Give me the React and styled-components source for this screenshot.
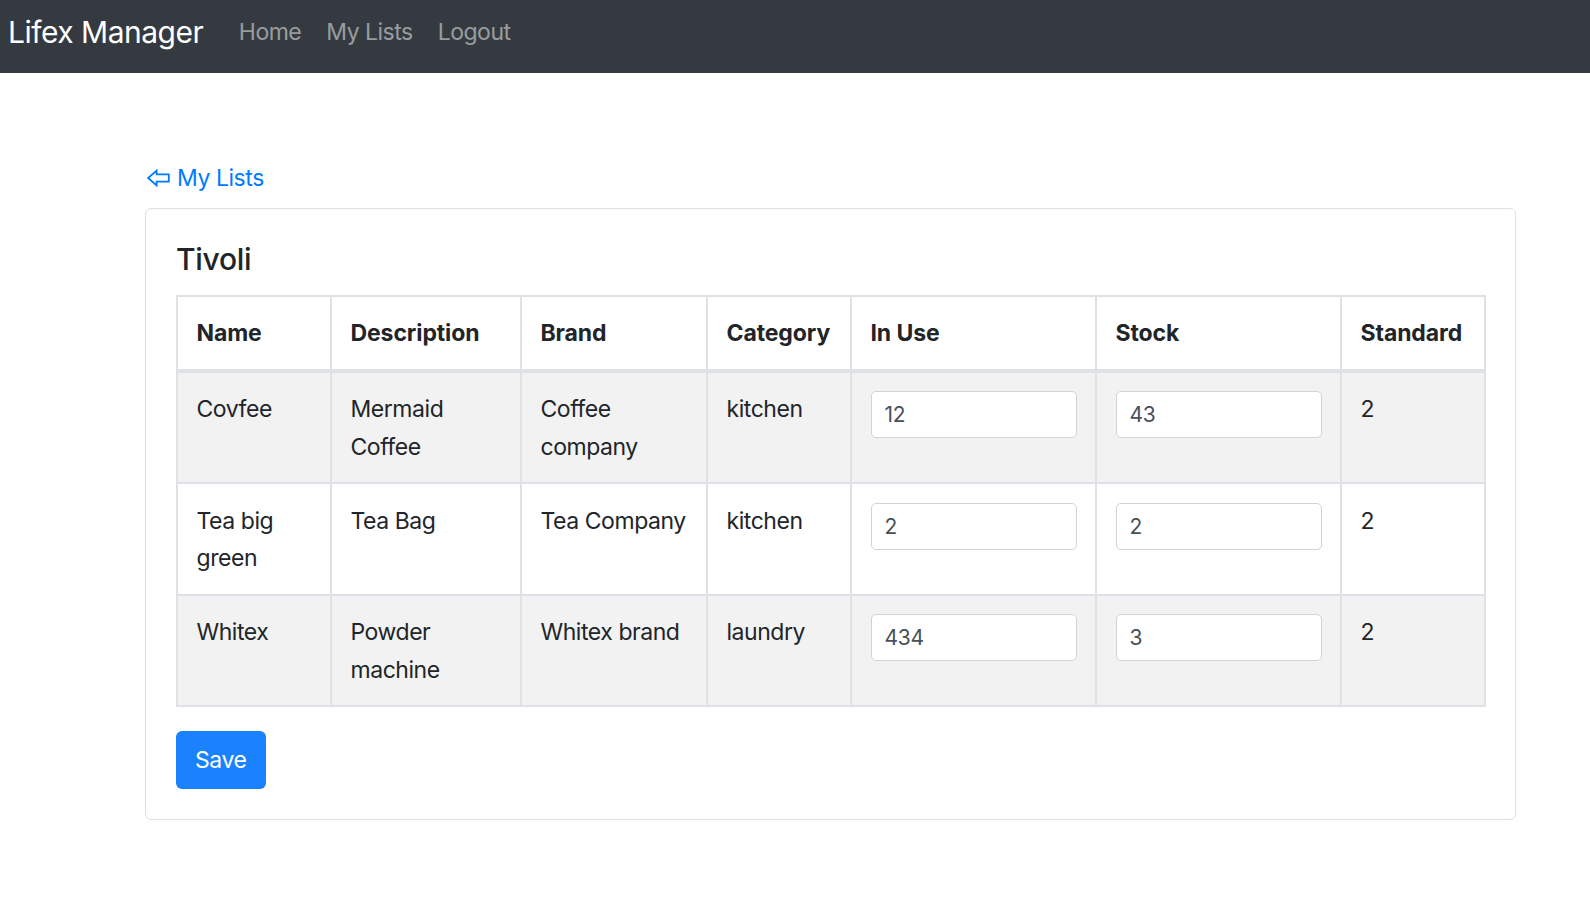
import React from 'react';
import styled, { createGlobalStyle } from 'styled-components';

const GlobalStyle = createGlobalStyle`
  body {
    margin: 0;
    background: #fff;
    font-family: Inter, "Liberation Sans", sans-serif;
    color: #212529;
  }
`;

const font = `Inter, "Liberation Sans", sans-serif`;

const NavBar = styled.nav`
  height: 73px;
  background: #343a40;
  display: flex;
  align-items: center;
  padding: 0 8px;
  box-sizing: border-box;
`;

const Brand = styled.a`
  font-family: ${font};
  font-size: 30px;
  letter-spacing: -0.5px;
  color: #fff;
  margin-right: 23px;
  padding-bottom: 10px;
`;

const NavLink = styled.a`
  font-family: ${font};
  font-size: 23px;
  letter-spacing: -0.5px;
  color: rgba(255, 255, 255, 0.5);
  padding: 0 12.5px;
  padding-bottom: 9px;
`;

const Main = styled.main`
  padding: 87px 0 0 145px;
`;

const Container = styled.div`
  width: 1371px;
`;

const BackLink = styled.a`
  display: inline-flex;
  align-items: center;
  gap: 7px;
  font-family: ${font};
  font-size: 23px;
  line-height: 36px;
  letter-spacing: -0.45px;
  color: #007bff;
  margin-left: 2px;
  margin-bottom: 12px;
`;

const Card = styled.div`
  border: 1.5px solid #e0e0e0;
  border-radius: 6px;
  padding: 30px;
`;

const Title = styled.h5`
  margin: 2px 0 16px;
  font-family: ${font};
  font-size: 30px;
  font-weight: 500;
  line-height: 37.5px;
  letter-spacing: -0.3px;
  color: #212529;
`;

const Table = styled.table`
  width: 100%;
  table-layout: fixed;
  border-collapse: collapse;
  margin-bottom: 24px;
  font-family: ${font};
  font-size: 23px;
  letter-spacing: -0.45px;
  line-height: 37.5px;
  color: #212529;
`;

const Th = styled.th`
  text-align: left;
  font-weight: 700;
  letter-spacing: -0.1px;
  padding: 18px 18.5px 16.5px;
  border: 2px solid #dee2e6;
  border-bottom-width: 4px;
  vertical-align: bottom;
`;

const Tr = styled.tr`
  background: ${(p) => (p.$striped ? '#f2f2f2' : '#fff')};
`;

const Td = styled.td`
  padding: 18.5px 18.5px 16px;
  border: 2px solid #dee2e6;
  vertical-align: top;
`;

const Input = styled.input`
  display: block;
  width: 100%;
  box-sizing: border-box;
  height: 47px;
  padding: 0 13px;
  font-family: ${font};
  font-size: 21px;
  letter-spacing: -0.3px;
  color: #495057;
  background: #fff;
  border: 1.5px solid #ced4da;
  border-radius: 5px;
  outline: none;
`;

const SaveButton = styled.button`
  font-family: ${font};
  font-size: 23px;
  letter-spacing: -0.4px;
  line-height: 36px;
  color: #fff;
  background: #1a82ff;
  border: none;
  border-radius: 6px;
  padding: 10px 19px;
  height: 58px;
`;

const ArrowIcon = () => (
  <svg width="23" height="18" viewBox="0 0 23 18" fill="none">
    <path
      d="M1.2 9 L9.6 1.6 L9.6 5.4 L21.8 5.4 L21.8 12.6 L9.6 12.6 L9.6 16.4 Z"
      stroke="#007bff"
      strokeWidth="1.8"
      strokeLinejoin="miter"
    />
  </svg>
);

const items = [
  { name: 'Covfee', desc: 'Mermaid Coffee', brand: 'Coffee company', cat: 'kitchen', inUse: '12', stock: '43', std: 2 },
  { name: 'Tea big green', desc: 'Tea Bag', brand: 'Tea Company', cat: 'kitchen', inUse: '2', stock: '2', std: 2 },
  { name: 'Whitex', desc: 'Powder machine', brand: 'Whitex brand', cat: 'laundry', inUse: '434', stock: '3', std: 2 },
];

const widths = [154, 190, 186, 144, 245, 245, 144];

export default function App() {
  return (
    <>
      <GlobalStyle />
      <NavBar>
        <Brand>Lifex Manager</Brand>
        <NavLink>Home</NavLink>
        <NavLink>My Lists</NavLink>
        <NavLink>Logout</NavLink>
      </NavBar>
      <Main>
        <Container>
          <BackLink>
            <ArrowIcon />
            My Lists
          </BackLink>
          <Card>
            <Title>Tivoli</Title>
            <Table>
              <colgroup>
                {widths.map((w, i) => (
                  <col key={i} style={{ width: w }} />
                ))}
              </colgroup>
              <thead>
                <tr>
                  <Th>Name</Th>
                  <Th>Description</Th>
                  <Th>Brand</Th>
                  <Th>Category</Th>
                  <Th>In Use</Th>
                  <Th>Stock</Th>
                  <Th>Standard</Th>
                </tr>
              </thead>
              <tbody>
                {items.map((it, i) => (
                  <Tr key={it.name} $striped={i % 2 === 0}>
                    <Td>{it.name}</Td>
                    <Td>{it.desc}</Td>
                    <Td>{it.brand}</Td>
                    <Td>{it.cat}</Td>
                    <Td>
                      <Input defaultValue={it.inUse} />
                    </Td>
                    <Td>
                      <Input defaultValue={it.stock} />
                    </Td>
                    <Td>{it.std}</Td>
                  </Tr>
                ))}
              </tbody>
            </Table>
            <SaveButton>Save</SaveButton>
          </Card>
        </Container>
      </Main>
    </>
  );
}
